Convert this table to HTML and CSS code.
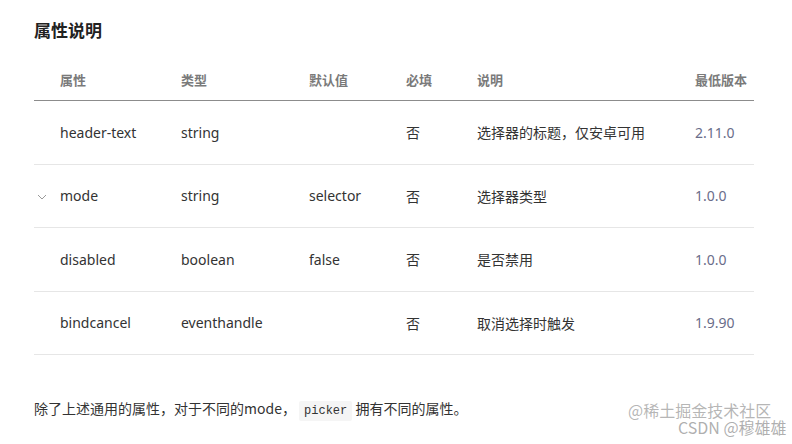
FILE: index.html
```html
<!DOCTYPE html>
<html lang="zh">
<head>
<meta charset="utf-8">
<link rel="stylesheet" href="styles.css">
</head>
<body>
<div class="page">
  <h2 class="title">属性说明</h2>
  <table class="props">
    <thead>
      <tr>
        <th class="c1">属性</th>
        <th class="c2">类型</th>
        <th class="c3">默认值</th>
        <th class="c4">必填</th>
        <th class="c5">说明</th>
        <th class="c6">最低版本</th>
      </tr>
    </thead>
    <tbody>
      <tr>
        <td class="c1">header-text</td>
        <td>string</td>
        <td></td>
        <td>否</td>
        <td>选择器的标题，仅安卓可用</td>
        <td class="ver">2.11.0</td>
      </tr>
      <tr>
        <td class="c1"><span class="chev"><svg width="10" height="6" viewBox="0 0 10 6"><path d="M1 1 L5 5 L9 1" fill="none" stroke="#9a9a9a" stroke-width="1"/></svg></span>mode</td>
        <td>string</td>
        <td>selector</td>
        <td>否</td>
        <td>选择器类型</td>
        <td class="ver">1.0.0</td>
      </tr>
      <tr>
        <td class="c1">disabled</td>
        <td>boolean</td>
        <td>false</td>
        <td>否</td>
        <td>是否禁用</td>
        <td class="ver">1.0.0</td>
      </tr>
      <tr>
        <td class="c1">bindcancel</td>
        <td>eventhandle</td>
        <td></td>
        <td>否</td>
        <td>取消选择时触发</td>
        <td class="ver">1.9.90</td>
      </tr>
    </tbody>
  </table>
  <p class="note">除了上述通用的属性，对于不同的mode， <code class="code">picker</code> 拥有不同的属性。</p>
</div>
<div class="watermark">
  <span class="wm1">@稀土掘金技术社区</span>
  <span class="wm2">CSDN @穆雄雄</span>
</div>
</body>
</html>
```
FILE: styles.css
```css
html, body {
  margin: 0;
  padding: 0;
  background: #ffffff;
}
body {
  font-family: "Noto Sans", "Noto Sans CJK SC", sans-serif;
  color: #333333;
  width: 792px;
  height: 444px;
  overflow: hidden;
  position: relative;
}
.page {
  padding: 19px 38px 0 34px;
}
.title {
  margin: 0;
  font-size: 17px;
  font-weight: 700;
  line-height: 22px;
  color: #222222;
  font-family: "Noto Sans CJK SC", sans-serif;
}
.props {
  margin-top: 18px;
  width: 720px;
  border-collapse: collapse;
  table-layout: fixed;
  font-size: 14px;
}
.props th {
  height: 41px;
  padding: 0;
  text-align: left;
  font-size: 13px;
  font-weight: 700;
  color: #7a7a7a;
  font-family: "Noto Sans CJK SC", sans-serif;
  border-bottom: 1px solid #8c8c8c;
  vertical-align: middle;
}
.props td {
  height: 62.5px;
  padding: 0;
  text-align: left;
  vertical-align: middle;
  border-bottom: 1px solid #e6e6e6;
  color: #333333;
  white-space: nowrap;
}
.props .c1 { width: 147px; padding-left: 26px; position: relative; }
.props .c2 { width: 128px; }
.props .c3 { width: 97px; }
.props .c4 { width: 71px; }
.props .c5 { width: 218px; }
.props .c6 { width: auto; }
.props th.c1 { width: 121px; }
.props td.c1 { padding-left: 26px; }
.props td.ver {
  color: #6a6d8a;
}
.chev {
  position: absolute;
  left: 3px;
  top: 50%;
  margin-top: -2px;
  display: block;
  width: 10px;
  height: 6px;
  line-height: 0;
}
.note {
  margin: 42px 0 0 0;
  font-size: 14px;
  line-height: 22px;
  color: #333333;
  font-family: "Noto Sans CJK SC", sans-serif;
}
.code {
  font-family: "Liberation Mono", monospace;
  font-size: 12px;
  background: #f5f5f5;
  padding: 3px 5px;
  border-radius: 2px;
  color: #333333;
}
.watermark {
  position: absolute;
  left: 628px;
  top: 400px;
  width: 160px;
  height: 40px;
  font-family: "Noto Sans CJK SC", sans-serif;
}
.wm1 {
  position: absolute;
  left: 0;
  top: 0;
  font-size: 16px;
  line-height: 20px;
  color: rgba(150, 150, 150, 0.7);
  white-space: nowrap;
}
.wm2 {
  position: absolute;
  left: 50px;
  top: 17px;
  font-size: 16px;
  line-height: 20px;
  color: rgba(140, 140, 140, 0.7);
  white-space: nowrap;
}
```
